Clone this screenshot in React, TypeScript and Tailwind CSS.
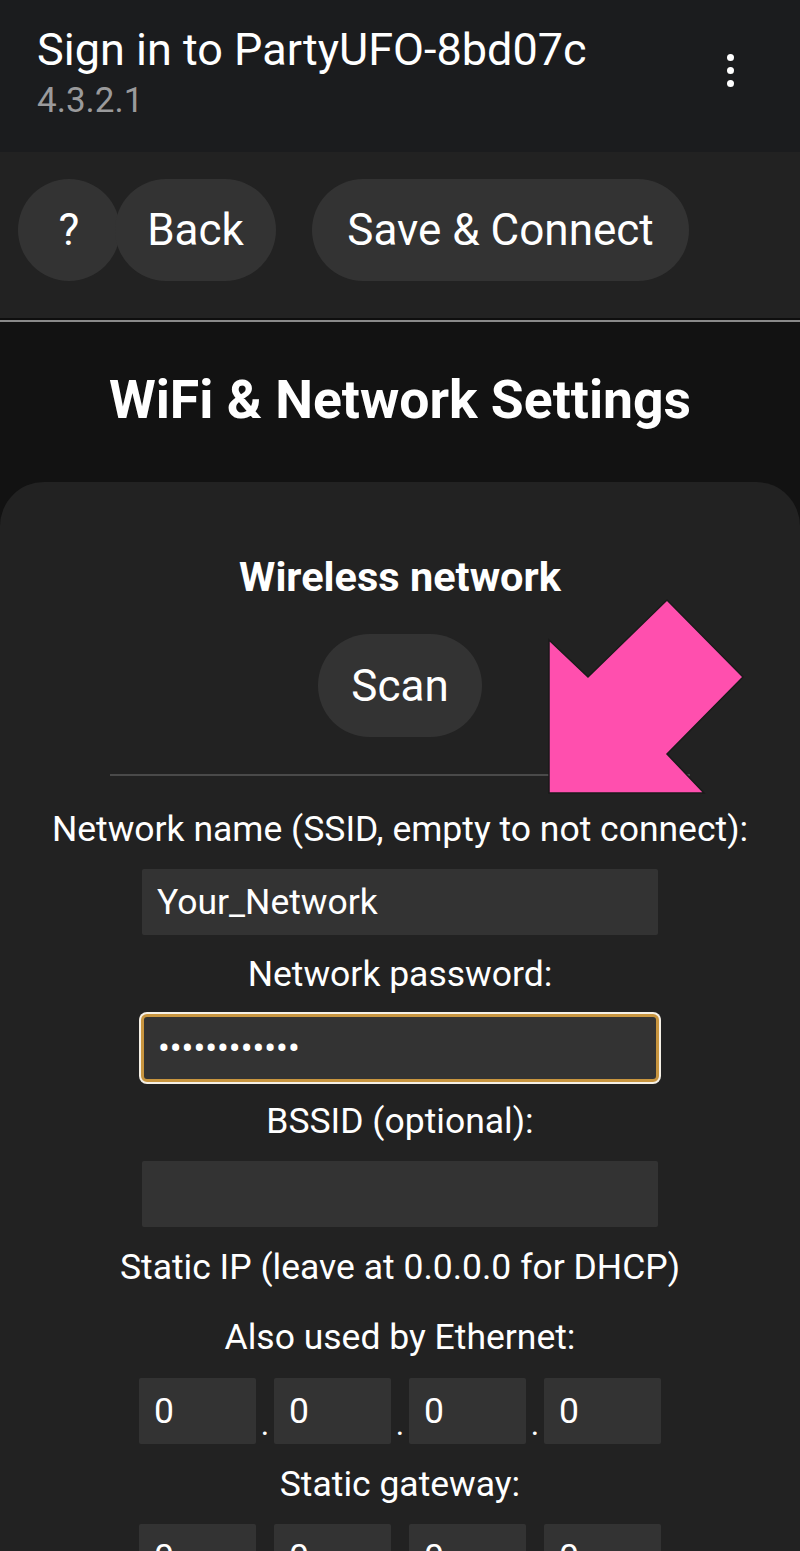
import React from "react";

const inputCls =
  "h-[66px] bg-[#333333] text-white text-[35.5px] px-[15px] outline-none border-0 rounded-[2px]";

const labelCls = "h-[40px] leading-[40px] text-[35.5px] whitespace-nowrap";

function IpRow({ top }: { top: string }) {
  return (
    <div className={`flex items-end ${top}`}>
      {[0, 1, 2, 3].map((i) => (
        <React.Fragment key={i}>
          {i > 0 && <span className="w-[18px] text-center text-[32px] leading-[40px] text-white">.</span>}
          <input readOnly value="0" className={`${inputCls} w-[117px]`} />
        </React.Fragment>
      ))}
    </div>
  );
}

export default function App() {
  return (
    <div className="min-h-screen bg-[#222222] text-white" style={{ fontFamily: "Roboto, 'Noto Sans', sans-serif" }}>
      {/* Captive portal title bar */}
      <header className="h-[152px] bg-[#1b1c1e] flex justify-between pl-[37px] pr-[66px]">
        <div className="pt-[23px]">
          <h1 className="text-[45px] leading-[54px] font-normal text-white">Sign in to PartyUFO-8bd07c</h1>
          <p className="text-[35px] leading-[42px] text-[#9a9a9c] mt-[3px]">4.3.2.1</p>
        </div>
        <div className="pt-[54px] flex flex-col items-center gap-[6px]">
          <span className="w-[7px] h-[7px] rounded-full bg-white" />
          <span className="w-[7px] h-[7px] rounded-full bg-white" />
          <span className="w-[7px] h-[7px] rounded-full bg-white" />
        </div>
      </header>

      {/* Top buttons */}
      <div className="h-[166px] bg-[#222222] flex items-start pt-[27px] pl-[18px]">
        <button className="w-[102px] h-[102px] rounded-full bg-[#333333] text-[44px] text-white">?</button>
        <button className="-ml-[5px] w-[161px] h-[102px] rounded-[51px] bg-[#333333] text-[44px] text-white">Back</button>
        <button className="ml-[36px] w-[377px] h-[102px] rounded-[51px] bg-[#333333] text-[44px] text-white whitespace-nowrap">Save &amp; Connect</button>
      </div>
      <div className="h-[2px] bg-[#0e0e0e]" />
      <div className="h-[2px] bg-[#8a8a8a]" />

      <div className="bg-[#121212] pt-[50px]">
        <h2 className="text-center text-[53.5px] leading-[56px] font-bold">WiFi &amp; Network Settings</h2>

        {/* Settings card */}
        <div className="relative mt-[54px] bg-[#222222] rounded-t-[44px] flex flex-col items-center pt-[74px] pb-[40px]">
          <h3 className="text-[41.5px] leading-[42px] font-bold">Wireless network</h3>
          <button className="mt-[36px] w-[164px] h-[103px] rounded-[52px] bg-[#333333] text-[44px] text-white">Scan</button>
          <div className="mt-[37px] w-[580px] h-[2px] bg-[#4a4a4a]" />

          <div className={`mt-[33px] ${labelCls}`}>Network name (SSID, empty to not connect):</div>
          <input readOnly value="Your_Network" className={`${inputCls} mt-[20px] w-[516px]`} />

          <div className={`mt-[19px] ${labelCls}`}>Network password:</div>
          <input
            readOnly
            type="password"
            value="yourpassword"
            className="mt-[20px] w-[518px] h-[68px] bg-[#333333] text-white text-[35px] px-[14px] outline-none border-[3px] border-[#c8953f] rounded-[6px] ring-2 ring-[#f5f0e6]"
          />

          <div className={`mt-[19px] ${labelCls}`}>BSSID (optional):</div>
          <input readOnly value="" className={`${inputCls} mt-[20px] w-[516px]`} />

          <div className={`mt-[20px] ${labelCls}`}>Static IP (leave at 0.0.0.0 for DHCP)</div>
          <div className={`mt-[30px] ${labelCls}`}>Also used by Ethernet:</div>
          <IpRow top="mt-[21px]" />

          <div className={`mt-[20px] ${labelCls}`}>Static gateway:</div>
          <IpRow top="mt-[20px]" />

          {/* Pink annotation arrow */}
          <svg className="absolute left-[546px] top-[116px]" width="202" height="198" viewBox="546 598 202 198">
            <polygon
              points="549,640 588,677 667,600 743,677 667,754 704,793 549,793"
              fill="#ff4fae"
              stroke="#1a1a1a"
              strokeWidth="1.5"
            />
          </svg>
        </div>
      </div>
    </div>
  );
}
